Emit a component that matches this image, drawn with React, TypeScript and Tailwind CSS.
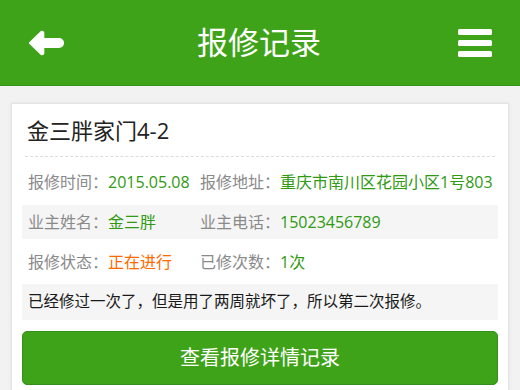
import React from "react";

const green = "text-[#2f9a12]";

function InfoRow({
    items,
    shaded,
    className,
}: {
    items: { label: string; value: string; color: string }[];
    shaded?: boolean;
    className?: string;
}) {
    return (
        <div
            className={`flex h-[34px] items-center pl-[6px] text-[16px] ${shaded ? "bg-[#f5f5f5]" : ""} ${className ?? ""}`}
        >
            {items.map((it, i) => (
                <div
                    key={it.label}
                    className={`flex whitespace-nowrap ${i === 0 ? "w-[172px]" : ""}`}
                >
                    <span className="text-[#8a8a8a]">{it.label}：</span>
                    <span className={it.color}>{it.value}</span>
                </div>
            ))}
        </div>
    );
}

export default function App() {
    return (
        <div className="w-[520px] h-[390px] overflow-hidden bg-[#f2f2f2] font-['Open_Sans','Noto_Sans_CJK_SC',sans-serif]">
            {/* header */}
            <div className="flex h-[86px] items-center justify-between bg-[#3fa31a] pl-[28px] pr-[28px] border-b border-[#389216]">
                <svg width="36" height="26" viewBox="0 0 37 27">
                    <path
                        d="M2 13.5 L14 2 L15.5 2.5 L15.5 9.5 L32 9.5 A4 4 0 0 1 32 17.5 L15.5 17.5 L15.5 24.5 L14 25 Z"
                        fill="white"
                        stroke="white"
                        strokeWidth="2.5"
                        strokeLinejoin="round"
                    />
                </svg>
                <div className="mr-[4px] text-[31px] leading-none text-white">报修记录</div>
                <svg width="34" height="28" viewBox="0 0 34 28">
                    <rect x="0" y="0" width="34" height="6" rx="1.5" fill="white" />
                    <rect x="0" y="11" width="34" height="6" rx="1.5" fill="white" />
                    <rect x="0" y="22" width="34" height="6" rx="1.5" fill="white" />
                </svg>
            </div>

            {/* card */}
            <div className="px-[11px] pt-[17px]">
                <div className="bg-white border border-[#e4e4e4] shadow-[0_0_3px_rgba(0,0,0,0.08)] px-[10px] pb-[20px]">
                    <div className="flex h-[52px] items-center pl-[5px] text-[22px] text-[#222]">
                        金三胖家门4-2
                    </div>
                    <div className="mx-[3px] border-b border-dashed border-[#dcdcdc]" />

                    <InfoRow
                        className="mt-[8px]"
                        items={[
                            { label: "报修时间", value: "2015.05.08", color: green },
                            { label: "报修地址", value: "重庆市南川区花园小区1号803", color: green },
                        ]}
                    />
                    <InfoRow
                        shaded
                        className="mt-[6px]"
                        items={[
                            { label: "业主姓名", value: "金三胖", color: green },
                            { label: "业主电话", value: "15023456789", color: green },
                        ]}
                    />
                    <InfoRow
                        className="mt-[6px]"
                        items={[
                            { label: "报修状态", value: "正在进行", color: "text-[#ff6a00]" },
                            { label: "已修次数", value: "1次", color: green },
                        ]}
                    />

                    <div className="mt-[5px] flex h-[36px] items-center bg-[#f5f5f5] pl-[6px] text-[15.5px] text-[#1a1a1a] whitespace-nowrap">
                        已经修过一次了，但是用了两周就坏了，所以第二次报修。
                    </div>

                    <button className="mt-[11px] flex h-[54px] w-full items-center justify-center rounded-[5px] border border-[#34901a] bg-[#3fa31a] text-[20px] text-white">
                        查看报修详情记录
                    </button>
                </div>
            </div>
        </div>
    );
}
